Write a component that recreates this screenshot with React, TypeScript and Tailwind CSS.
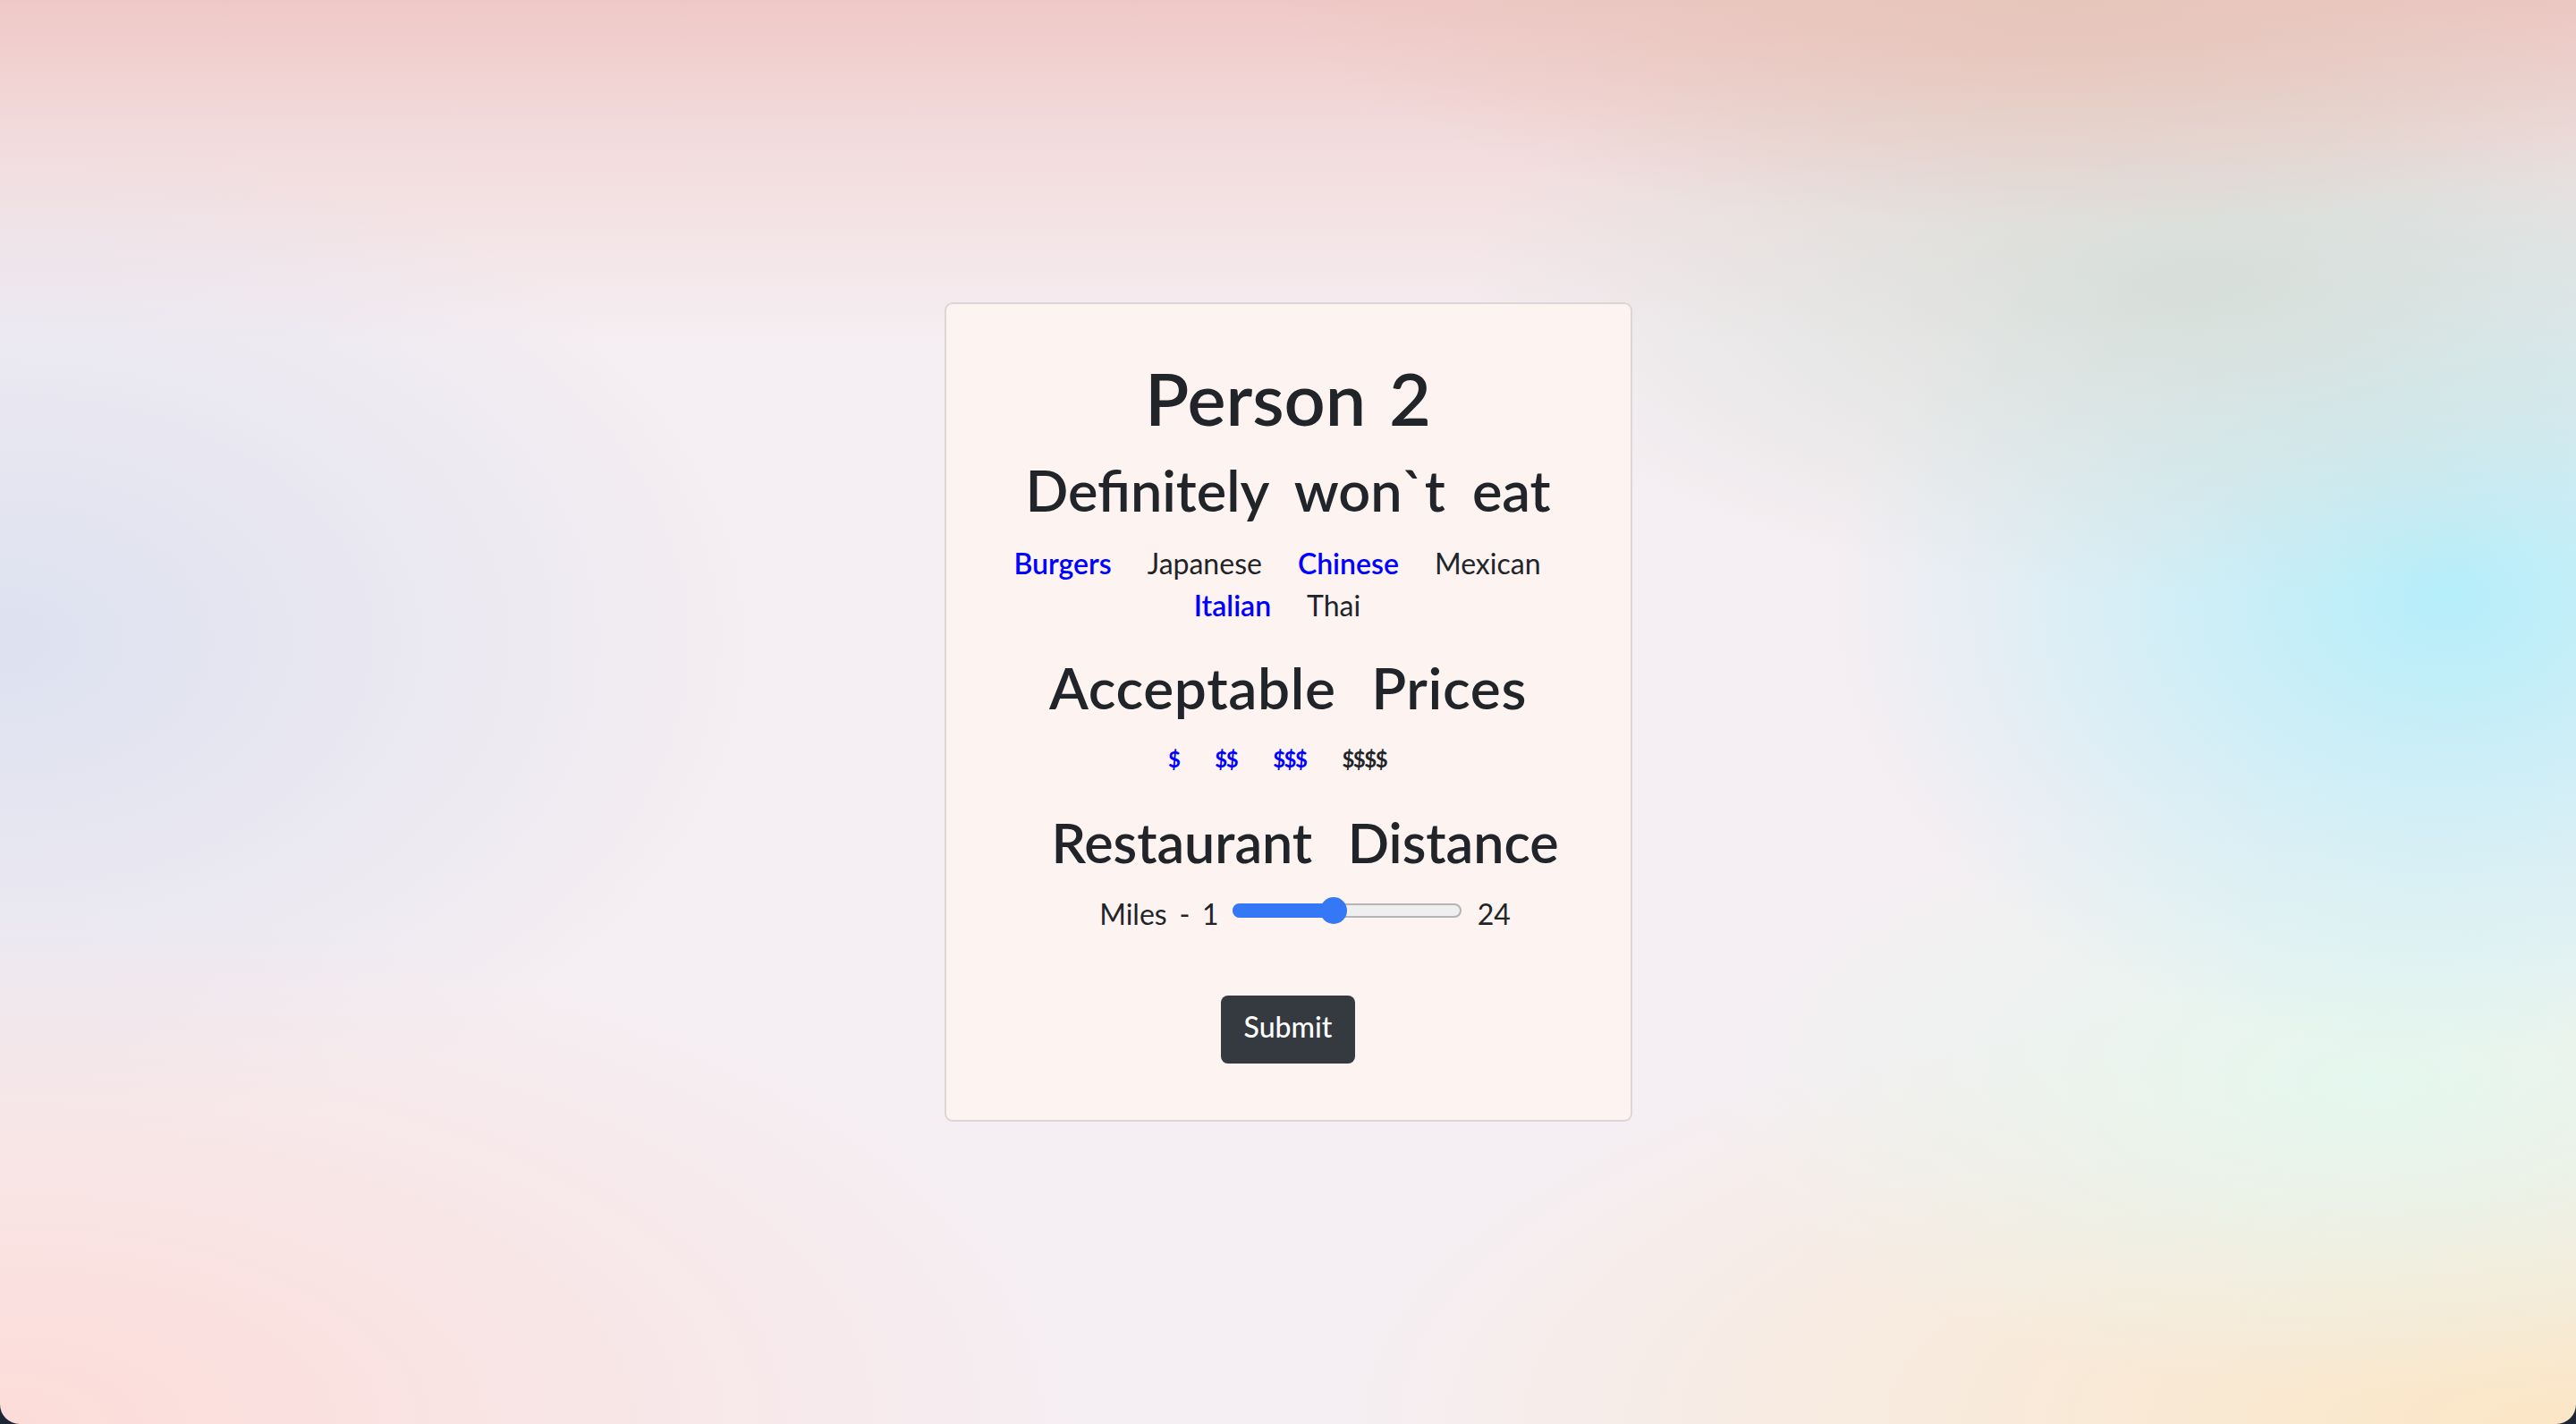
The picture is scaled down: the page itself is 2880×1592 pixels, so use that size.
import { useState } from "react";

const cuisines = [
  { name: "Burgers", picked: true },
  { name: "Japanese", picked: false },
  { name: "Chinese", picked: true },
  { name: "Mexican", picked: false },
  { name: "Italian", picked: true },
  { name: "Thai", picked: false },
];

const prices = [
  { label: "$", picked: true },
  { label: "$$", picked: true },
  { label: "$$$", picked: true },
  { label: "$$$$", picked: false },
];

function DistanceSlider({ value, max }: { value: number; max: number }) {
  // track is 256px wide, thumb is 30px
  const pos = Math.round(((value - 1) / (max - 1)) * 226) + 15;
  return (
    <div className="relative mb-[8px] h-[16px] w-[256px] rounded-full border-2 border-[#b4b4b4] bg-[#efefef]">
      <div
        className="absolute -left-[2px] -top-[2px] -bottom-[2px] rounded-full bg-[#3478f6]"
        style={{ width: pos + 2 }}
      />
      <div
        className="absolute top-1/2 h-[30px] w-[30px] -translate-y-1/2 rounded-full bg-[#3478f6]"
        style={{ left: pos - 17 }}
      />
    </div>
  );
}

export default function App() {
  const [miles] = useState(11);

  return (
    <div className="h-screen w-full bg-[#1d2636]">
      <div className="flex h-full w-full items-center justify-center rounded-b-[22px] bg-[#f5eef2] bg-[radial-gradient(ellipse_30%_16%_at_80%_0%,#e6c5ba,transparent),radial-gradient(ellipse_28%_22%_at_85%_20%,rgba(214,222,216,0.95),transparent),radial-gradient(ellipse_24%_32%_at_95%_42%,#b5eefa,transparent),radial-gradient(ellipse_26%_22%_at_92%_76%,#e4f7ee,transparent),radial-gradient(ellipse_48%_32%_at_100%_100%,#fbe6c5,transparent),radial-gradient(ellipse_42%_36%_at_0%_100%,#fcdcd8,transparent),radial-gradient(ellipse_30%_36%_at_0%_45%,#dde1f0,transparent),linear-gradient(180deg,#efc8c6_0%,rgba(240,205,203,0.6)_9%,rgba(240,205,203,0)_24%)] [font-family:Lato,'Noto_Sans',sans-serif]">
        <div className="flex w-[769px] flex-col items-center rounded-[9px] border-2 border-[#ddd6d6] bg-[#fdf3f1] px-[60px] pt-[64px] pb-[63px] text-[#212529] [word-spacing:5.6px]">
          <h1 className="text-[81px] font-semibold leading-[81px]">Person 2</h1>

          <h2 className="mt-[31px] text-[63px] font-semibold leading-[63px] [word-spacing:0.23em]">Definitely won`t eat</h2>

          <div className="mt-[27px] flex w-full flex-wrap justify-center gap-x-[40px] pr-[24px] text-[32px] leading-[47px]">
            {cuisines.map((c) => (
              <span key={c.name} className={c.picked ? "font-semibold text-[#0000ff]" : "text-[#212529]"}>
                {c.name}
              </span>
            ))}
          </div>

          <h2 className="mt-[37px] text-[64px] font-semibold leading-[64px] tracking-[0.01em] [word-spacing:0.36em]">Acceptable Prices</h2>

          <div className="mt-[33px] flex w-full justify-center gap-x-[40px] pr-[24px] text-[24px] font-bold leading-[30px] tracking-[-1.5px]">
            {prices.map((p) => (
              <span key={p.label} className={p.picked ? "text-[#0000ff]" : "text-[#212529]"}>
                {p.label}
              </span>
            ))}
          </div>

          <h2 className="mt-[47px] pl-[38px] text-[61px] font-semibold leading-[61px] [word-spacing:0.4em]">Restaurant Distance</h2>

          <div className="mt-[30px] flex h-[40px] items-center pl-[38px] text-[32px] leading-[40px]">
            <span>Miles - 1</span>
            <div className="ml-[15px] mr-[18px] flex items-center">
              <DistanceSlider value={miles} max={24} />
            </div>
            <span>24</span>
          </div>

          <button className="mt-[71px] flex h-[76px] w-[150px] items-center justify-center rounded-[8px] bg-[#343a40] pb-[6px] text-[32px] font-medium text-white">
            Submit
          </button>
        </div>
      </div>
    </div>
  );
}
